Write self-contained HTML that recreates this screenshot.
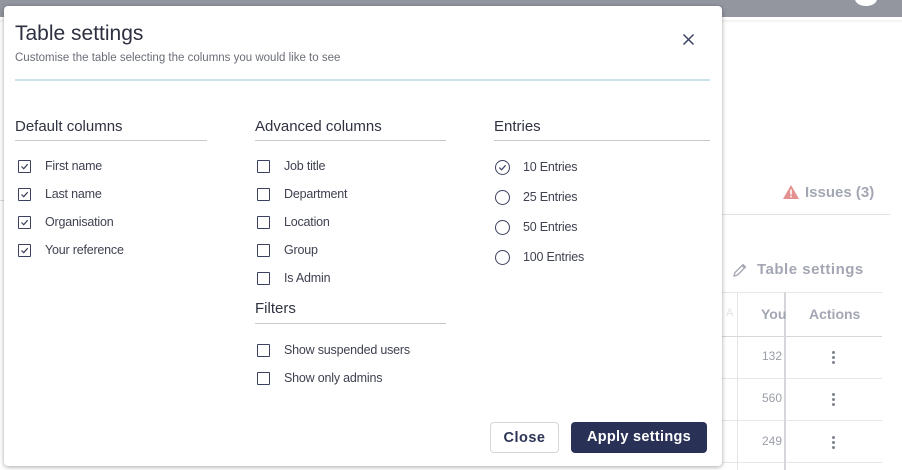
<!DOCTYPE html>
<html><head><meta charset="utf-8">
<style>
*{margin:0;padding:0;box-sizing:border-box}
body{width:902px;height:470px;overflow:hidden;background:#fff;font-family:"Liberation Sans",sans-serif;position:relative;color:#3a3d4a}
.a{position:absolute;white-space:nowrap}
.top{left:0;top:0;width:902px;height:17px;background:#93969f}
.modal{left:4px;top:6px;width:718px;height:460px;background:#fff;border-radius:4px;box-shadow:0 1px 5px rgba(0,0,0,.35)}
.h{font-size:15px;color:#2f3240}
.ln{height:1px;background:#c8c9cd}
.cb{width:13px;height:13px;border:1.5px solid #3b4160;border-radius:1px}
.lb{font-size:12.5px;color:#3f4250;letter-spacing:-0.2px}
.rd{width:15px;height:15px;border:1.5px solid #3b4160;border-radius:50%}
.bg{color:#a3a7b3;font-weight:bold}
.vl{width:1px;background:#e3e4e6}
.hl{height:1px;background:#e6e7e9}
.dot{width:3px;height:3px;border-radius:50%;background:#7f8390}
</style></head><body>
<div class="a top"></div>
<div class="a" style="left:855px;top:-8px;width:22px;height:14px;border-radius:50%;background:#fff"></div>
<div class="a" style="left:0;top:20px;width:902px;height:3px;background:linear-gradient(#eee,#fff)"></div>
<!-- background -->
<svg class="a" style="left:782px;top:184px" width="18" height="16" viewBox="0 0 18 16"><path d="M9 1 L17 15 H1 Z" fill="#e49090"/><rect x="8.2" y="5.5" width="1.6" height="5" fill="#fff"/><rect x="8.2" y="11.7" width="1.6" height="1.6" fill="#fff"/></svg>
<div class="a bg" style="left:805px;top:184px;font-size:15px">Issues (3)</div>
<div class="a hl" style="left:722px;top:214px;width:168px;background:#e0e1e3"></div>
<svg class="a" style="left:732px;top:262px" width="16" height="16" viewBox="0 0 16 16"><path d="M2 14 L3 10.5 L11 2.5 L13.5 5 L5.5 13 Z M10 3.5 L12.5 6" fill="none" stroke="#a3a7b3" stroke-width="1.3"/></svg>
<div class="a bg" style="left:757px;top:261px;font-size:15px;letter-spacing:.5px">Table settings</div>
<div class="a hl" style="left:722px;top:292px;width:160px"></div>
<div class="a hl" style="left:722px;top:336px;width:160px;background:#d6d7da"></div>
<div class="a hl" style="left:722px;top:378px;width:160px"></div>
<div class="a hl" style="left:722px;top:420px;width:160px"></div>
<div class="a hl" style="left:722px;top:462px;width:160px"></div>
<div class="a vl" style="left:737px;top:292px;height:178px"></div>
<div class="a vl" style="left:784px;top:292px;height:178px;width:2px;background:#d6d7da"></div>
<div class="a" style="left:726px;top:307px;font-size:11px;color:#e2e3e6">A</div>
<div class="a bg" style="left:761px;top:306px;font-size:14px">You</div>
<div class="a bg" style="left:809px;top:306px;font-size:14px">Actions</div>
<div class="a" style="left:762px;top:349px;font-size:12px;color:#9a9ea8">132</div>
<div class="a" style="left:762px;top:391px;font-size:12px;color:#9a9ea8">560</div>
<div class="a" style="left:762px;top:434px;font-size:12px;color:#9a9ea8">249</div>
<div class="a dot" style="left:832px;top:351px"></div><div class="a dot" style="left:832px;top:356px"></div><div class="a dot" style="left:832px;top:361px"></div>
<div class="a dot" style="left:832px;top:393px"></div><div class="a dot" style="left:832px;top:398px"></div><div class="a dot" style="left:832px;top:403px"></div>
<div class="a dot" style="left:832px;top:436px"></div><div class="a dot" style="left:832px;top:441px"></div><div class="a dot" style="left:832px;top:446px"></div>
<div class="a" style="left:0;top:200px;width:4px;height:1px;background:#ddd"></div>
<!-- modal -->
<div class="a modal"></div>
<div class="a" style="left:15px;top:22px;font-size:21px;color:#2d3040">Table settings</div>
<div class="a" style="left:15px;top:52px;font-size:11.5px;color:#6b6e78">Customise the table selecting the columns you would like to see</div>
<svg class="a" style="left:682px;top:33px" width="13" height="13" viewBox="0 0 13 13"><path d="M1.5 1.5 L11.5 11.5 M11.5 1.5 L1.5 11.5" stroke="#3b4160" stroke-width="1.5"/></svg>
<div class="a" style="left:15px;top:79px;width:695px;height:2px;background:#cbe4e9"></div>

<div class="a h" style="left:15px;top:118px">Default columns</div>
<div class="a ln" style="left:15px;top:140px;width:192px"></div>
<div class="a h" style="left:255px;top:118px">Advanced columns</div>
<div class="a ln" style="left:255px;top:140px;width:191px"></div>
<div class="a h" style="left:494px;top:118px">Entries</div>
<div class="a ln" style="left:494px;top:140px;width:216px"></div>

<div class="a cb" style="left:18px;top:160px"></div><div class="a lb" style="left:45px;top:159px">First name</div>
<div class="a cb" style="left:18px;top:188px"></div><div class="a lb" style="left:45px;top:187px">Last name</div>
<div class="a cb" style="left:18px;top:216px"></div><div class="a lb" style="left:45px;top:215px">Organisation</div>
<div class="a cb" style="left:18px;top:244px"></div><div class="a lb" style="left:45px;top:243px">Your reference</div>
<svg class="a" style="left:18px;top:160px" width="13" height="13" viewBox="0 0 13 13"><path d="M3.5 6.5 L5.7 8.7 L9.7 4.2" fill="none" stroke="#3b4160" stroke-width="1.2"/></svg>
<svg class="a" style="left:18px;top:188px" width="13" height="13" viewBox="0 0 13 13"><path d="M3.5 6.5 L5.7 8.7 L9.7 4.2" fill="none" stroke="#3b4160" stroke-width="1.2"/></svg>
<svg class="a" style="left:18px;top:216px" width="13" height="13" viewBox="0 0 13 13"><path d="M3.5 6.5 L5.7 8.7 L9.7 4.2" fill="none" stroke="#3b4160" stroke-width="1.2"/></svg>
<svg class="a" style="left:18px;top:244px" width="13" height="13" viewBox="0 0 13 13"><path d="M3.5 6.5 L5.7 8.7 L9.7 4.2" fill="none" stroke="#3b4160" stroke-width="1.2"/></svg>

<div class="a cb" style="left:257px;top:160px"></div><div class="a lb" style="left:284px;top:159px">Job title</div>
<div class="a cb" style="left:257px;top:188px"></div><div class="a lb" style="left:284px;top:187px">Department</div>
<div class="a cb" style="left:257px;top:216px"></div><div class="a lb" style="left:284px;top:215px">Location</div>
<div class="a cb" style="left:257px;top:244px"></div><div class="a lb" style="left:284px;top:243px">Group</div>
<div class="a cb" style="left:257px;top:272px"></div><div class="a lb" style="left:284px;top:271px">Is Admin</div>

<div class="a h" style="left:255px;top:300px">Filters</div>
<div class="a ln" style="left:255px;top:323px;width:191px"></div>
<div class="a cb" style="left:257px;top:344px"></div><div class="a lb" style="left:284px;top:343px">Show suspended users</div>
<div class="a cb" style="left:257px;top:372px"></div><div class="a lb" style="left:284px;top:371px">Show only admins</div>

<div class="a rd" style="left:495px;top:160px"></div><div class="a lb" style="left:523px;top:160px">10 Entries</div>
<svg class="a" style="left:495px;top:160px" width="15" height="15" viewBox="0 0 15 15"><path d="M4.3 7.6 L6.6 9.8 L10.6 5.3" fill="none" stroke="#3b4160" stroke-width="1.2"/></svg>
<div class="a rd" style="left:495px;top:190px"></div><div class="a lb" style="left:523px;top:190px">25 Entries</div>
<div class="a rd" style="left:495px;top:220px"></div><div class="a lb" style="left:523px;top:220px">50 Entries</div>
<div class="a rd" style="left:495px;top:250px"></div><div class="a lb" style="left:523px;top:250px">100 Entries</div>

<div class="a" style="left:490px;top:422px;width:69px;height:31px;border:1px solid #d4d6da;border-radius:4px;font-size:14.5px;font-weight:bold;color:#2c3354;text-align:center;line-height:31px;letter-spacing:.5px">Close</div>
<div class="a" style="left:571px;top:422px;width:136px;height:31px;background:#2a3156;border-radius:4px;font-size:14.5px;font-weight:bold;color:#fff;text-align:center;line-height:31px;letter-spacing:.3px">Apply settings</div>
</body></html>
